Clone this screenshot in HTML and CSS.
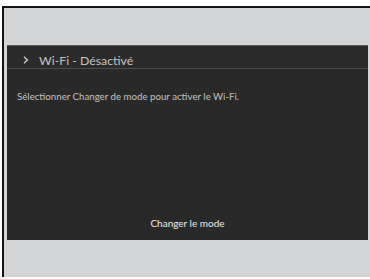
FILE: index.html
```html
<!DOCTYPE html>
<html lang="fr">
<head>
<meta charset="utf-8">
<title>Wi-Fi</title>
<link rel="stylesheet" href="styles.css">
</head>
<body>
<div class="frame">
  <div class="panel">
    <div class="header">
      <svg class="chev" width="6" height="8" viewBox="0 0 6 8"><path d="M1 0.8 L4.4 4 L1 7.2" fill="none" stroke="#c9c9c9" stroke-width="1.4"/></svg>
      <span class="title">Wi-Fi - Désactivé</span>
    </div>
    <div class="body">
      <p class="msg">Sélectionner Changer de mode pour activer le Wi-Fi.</p>
    </div>
    <div class="footer">
      <span class="btn">Changer le mode</span>
    </div>
  </div>
</div>
</body>
</html>
```
FILE: styles.css
```css
html, body {
  margin: 0;
  padding: 0;
  background: #ffffff;
  height: 100%;
}
body {
  font-family: Lato, "Liberation Sans", sans-serif;
}
.frame {
  margin: 6px 0 0 2px;
  border-top: 2px solid #141414;
  border-left: 2px solid #141414;
  background: #d3d4d6;
  height: 271px;
  box-sizing: border-box;
  padding: 37px 2px 0 3px;
}
.panel {
  height: 195px;
  box-sizing: border-box;
  background: #2a2929;
  border-top: 1px solid #5e5e5e;
  display: flex;
  flex-direction: column;
}
.header {
  display: flex;
  align-items: center;
  height: 23px;
  box-sizing: border-box;
  padding: 6px 0 0 16px;
  border-bottom: 1px solid #4a4a4a;
  background: #2c2b2b;
}
.chev {
  display: block;
  margin-right: 10px;
}
.title {
  font-size: 12.3px;
  line-height: 15px;
  color: #c4c4c4;
}
.body {
  flex: 1;
  padding: 21px 0 0 10px;
}
.msg {
  margin: 0;
  font-size: 9.7px;
  line-height: 12px;
  color: #c2c2c2;
}
.footer {
  display: flex;
  justify-content: center;
  padding-bottom: 10px;
}
.btn {
  font-size: 10px;
  line-height: 14px;
  color: #ececec;
}
```
